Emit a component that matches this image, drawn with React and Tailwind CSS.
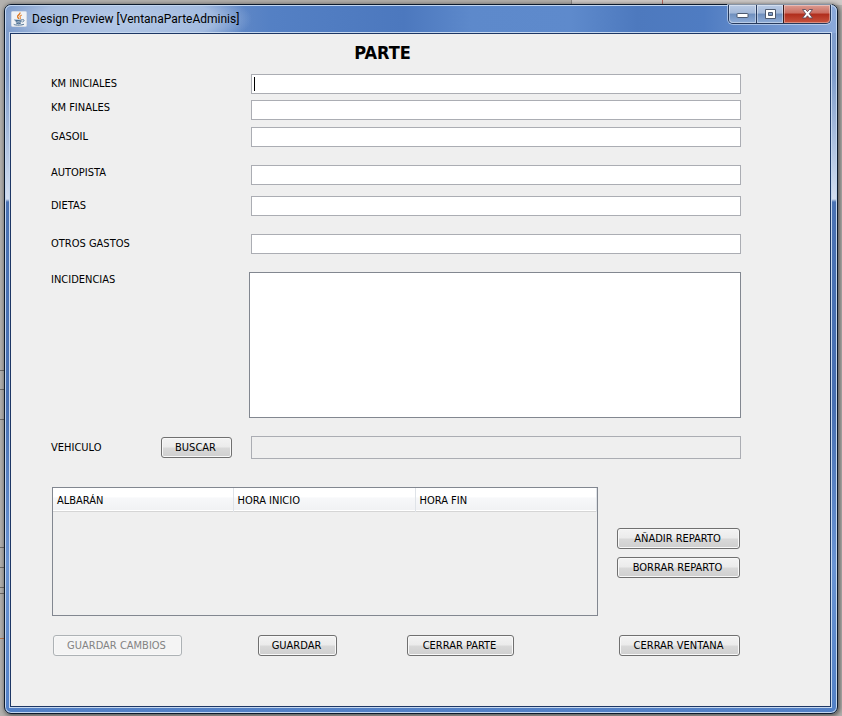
import React from "react";

const label = "text-[11px] leading-4 text-black";
const field =
  "block h-5 w-full min-w-0 border border-[#abadb3] bg-white px-[3px] text-[11px] text-black outline-none";
const button =
  "h-[21px] rounded-[3px] border border-[#707070] bg-[linear-gradient(#f3f3f3_0%,#ebebeb_48%,#d9d9d9_52%,#cfcfcf_100%)] pr-[2px] text-center text-[11px] leading-4 text-black shadow-[inset_0_0_0_1px_#f8f8f8] disabled:border-[#adb2b5] disabled:bg-none disabled:bg-[#f4f4f4] disabled:text-[#838383]";

const fields = [
  { id: "km-iniciales", text: "KM INICIALES", row: "items-center", focus: true },
  { id: "km-finales", text: "KM FINALES", row: "mt-[6px] items-start" },
  { id: "gasoil", text: "GASOIL", row: "mt-[7px] items-center" },
  { id: "autopista", text: "AUTOPISTA", row: "mt-[18px] items-start" },
  { id: "dietas", text: "DIETAS", row: "mt-[11px] items-center" },
  { id: "otros-gastos", text: "OTROS GASTOS", row: "mt-[18px] items-center" },
];

const columns = [
  { text: "ALBARÁN", width: "w-[180px]" },
  { text: "HORA INICIO", width: "w-[182px]" },
  { text: "HORA FIN", width: "" },
];

function JavaIcon() {
  return (
    <svg width="16" height="16" viewBox="0 0 16 16" aria-hidden="true">
      <rect x="0.5" y="0.5" width="15" height="15" rx="1" fill="#f1f3f6" stroke="#d5dbe4" />
      <path d="M8.9 1.6c.8 2-3.200 2.600-2.200 4.500.4.7 1 1 1 1.900" fill="none" stroke="#e07a22" strokeWidth="1.4" />
      <path d="M10.800 4c-1.700.7-2.300 1.500-1.500 2.500.4.500.1 1-.4 1.500" fill="none" stroke="#e58a3a" strokeWidth="1.1" />
      <path d="M4 8.700c-.8.7 5.500 1 7 0M4.700 10.600c1.200.7 4.600.6 5.800 0M5.300 12.300c1.200.4 3.400.4 4.500 0" fill="none" stroke="#4b6f92" strokeWidth="1.100" />
      <path d="M11.300 8.700c2.200-.6 2.300 1.600.1 2.400" fill="none" stroke="#4b6f92" strokeWidth="1" />
      <path d="M3 13c-1 1.300 7.500 1.600 10 .2" fill="none" stroke="#4b6f92" strokeWidth="1" />
    </svg>
  );
}

function WindowControls() {
  const glass =
    "flex h-[18px] items-center justify-center bg-[linear-gradient(#b9cae4_0%,#a3b8d8_45%,#6f8fbe_50%,#8fadd8_100%)] shadow-[inset_0_0_0_1px_rgba(255,255,255,0.4)]";
  return (
    <div className="flex self-start rounded-b-[5px] border border-t-0 border-[#26395c] shadow-[0_0_0_1px_rgba(215,228,246,0.6)]">
      <button aria-label="Minimizar" className={glass + " w-[27px] rounded-bl-[4px]"}>
        <svg width="13" height="12" viewBox="0 0 13 12" aria-hidden="true">
          <rect x="1" y="5.500" width="11" height="4" rx="0.5" fill="#fff" stroke="#4d5a70" />
        </svg>
      </button>
      <button aria-label="Maximizar" className={glass + " w-[27px] border-l border-[#26395c]"}>
        <svg width="13" height="12" viewBox="0 0 13 12" aria-hidden="true">
          <path fillRule="evenodd" d="M1.500 1.500h10v9h-10zM4.500 4.500v3h4v-3z" fill="#fff" stroke="#4d5a70" />
        </svg>
      </button>
      <button
        aria-label="Cerrar"
        className="flex h-[18px] w-[47px] items-center justify-center rounded-br-[4px] border-l border-[#3a1a1a] bg-[linear-gradient(#dc9c92_0%,#cb6d60_45%,#b02d1c_50%,#c9543f_100%)] shadow-[inset_0_0_0_1px_rgba(255,255,255,0.35)]"
      >
        <svg width="13" height="12" viewBox="0 0 13 12" aria-hidden="true">
          <path
            d="M1.500 1.500h3.200l1.800 2.200 1.800-2.200h3.200l-3.200 4.250 3.200 4.250h-3.200l-1.800-2.200-1.800 2.200h-3.200l3.200-4.250z"
            fill="#fff"
            stroke="#5b4a58"
            strokeWidth="0.9"
          />
        </svg>
      </button>
    </div>
  );
}

function Desktop() {
  return (
    <svg className="absolute inset-0 h-full w-full" aria-hidden="true">
      <rect x="190" width="382" height="5" fill="#b3b0ac" />
      <rect x="572" width="270" height="5" fill="#cfcac8" />
      <path d="M571.500 0v5" stroke="#8e8a88" />
      <path d="M662.500 0v5" stroke="#b5665c" />
      <path d="M0 370.500h5M0 389.500h5M0 419.500h5M0 547.500h5M0 567.500h5M0 587.500h5M0 593.500h5" stroke="#6f6c69" />
      <path d="M0 638.500h5" stroke="#b9744c" />
    </svg>
  );
}

export default function App() {
  return (
    <div className="relative flex min-h-screen bg-[#b4b2af] px-1 pt-1 pb-[2px] [font-family:'DejaVu_Sans_Condensed','DejaVu_Sans',sans-serif]">
      <Desktop />
      <main className="relative flex flex-1 flex-col rounded-[7px] border border-[#0c1a2c] bg-[linear-gradient(#7f9dcc_0px,#7f9dcc_70px,#d3deef_194px,#4a72b3_197px,#4870b2_400px,#6a94d3_560px,#5280c6_100%)] pr-[6px] pb-[6px] pl-[5px] shadow-[inset_0_0_0_1px_#c3d6f0,1px_1px_4px_1px_rgba(30,30,30,0.6)]">
        <header className="-mr-[6px] -ml-[5px] flex h-7 items-center rounded-t-[6px] bg-[radial-gradient(125px_34px_at_122px_14px,rgba(196,213,238,0.8)_0%,rgba(185,204,233,0.7)_70%,transparent_100%),linear-gradient(90deg,#7f9dcc_0%,#7f9dcc_8%,#6f92c9_22%,#5480c4_32%,#4c78be_48%,#5d89cb_56%,#5e8acc_68%,#4d79be_76%,#4f7cc2_84%,#8ba9da_100%)] pr-[6px] pl-[6px] shadow-[inset_0_1px_0_#c3d6f0,inset_1px_0_0_#c3d6f0,inset_-1px_0_0_#c3d6f0]">
          <JavaIcon />
          <h1 className="ml-[5px] flex-1 text-[12px] leading-4 text-black [font-family:Roboto,'Noto_Sans',sans-serif]">
            Design Preview [VentanaParteAdminis]
          </h1>
          <WindowControls />
        </header>

        <form
          className="flex flex-1 flex-col border border-[#1d3765] bg-[#efefef] pr-[89px] pb-10 pl-10 shadow-[0_0_0_1px_#c6d8ef]"
          onSubmit={(e) => e.preventDefault()}
        >
          <h2 className="mt-[7px] pr-[27px] text-center text-[18px] leading-6 font-bold text-black">PARTE</h2>

          <div className="mt-[9px]">
            {fields.map((f) => (
              <div key={f.id} className={"grid grid-cols-[200px_1fr] " + f.row}>
                <label htmlFor={f.id} className={label}>
                  {f.text}
                </label>
                <div className="relative">
                  <input id={f.id} type="text" className={field} />
                  {f.focus && <span className="absolute top-[3px] left-[3px] h-[14px] w-px bg-black" />}
                </div>
              </div>
            ))}
          </div>

          <div className="mt-[18px] grid grid-cols-[198px_1fr] items-start">
            <label htmlFor="incidencias" className={label}>
              INCIDENCIAS
            </label>
            <textarea
              id="incidencias"
              className="block h-[146px] w-full resize-none border border-[#828790] bg-white p-1 text-[11px] outline-none"
            />
          </div>

          <div className="mt-[18px] flex items-center">
            <label htmlFor="vehiculo" className={label + " w-[110px]"}>
              VEHICULO
            </label>
            <button type="button" className={button + " mr-[19px] w-[71px]"}>
              BUSCAR
            </button>
            <input
              id="vehiculo"
              type="text"
              readOnly
              className="block h-[23px] min-w-0 flex-1 border border-[#abadb3] bg-[#efefef] px-1 text-[11px] outline-none"
            />
          </div>

          <div className="mt-7 ml-px flex">
            <div className="h-[129px] flex-1 border border-[#828790]">
              <table className="w-full table-fixed border-collapse">
                <thead>
                  <tr className="h-[23px] border-b border-[#d5d5d5] bg-[linear-gradient(#ffffff_0%,#ffffff_40%,#f7f8fa_45%,#f1f2f4_100%)]">
                    {columns.map((c) => (
                      <th
                        key={c.text}
                        scope="col"
                        className={
                          "border-r border-[#dfe3e8] px-1 pt-1 text-left text-[11px] leading-4 font-normal text-black " +
                          c.width
                        }
                      >
                        {c.text}
                      </th>
                    ))}
                  </tr>
                </thead>
              </table>
            </div>
            <div className="mr-px ml-[19px] flex w-[123px] flex-col gap-2 pt-[41px]">
              <button type="button" className={button}>
                AÑADIR REPARTO
              </button>
              <button type="button" className={button}>
                BORRAR REPARTO
              </button>
            </div>
          </div>

          <div className="mt-[19px] mr-px ml-[2px] flex">
            <button type="button" disabled className={button + " w-[129px]"}>
              GUARDAR CAMBIOS
            </button>
            <button type="button" className={button + " ml-[76px] w-[79px]"}>
              GUARDAR
            </button>
            <button type="button" className={button + " ml-[70px] w-[107px]"}>
              CERRAR PARTE
            </button>
            <button type="button" className={button + " ml-auto w-[121px]"}>
              CERRAR VENTANA
            </button>
          </div>
        </form>
      </main>
    </div>
  );
}
